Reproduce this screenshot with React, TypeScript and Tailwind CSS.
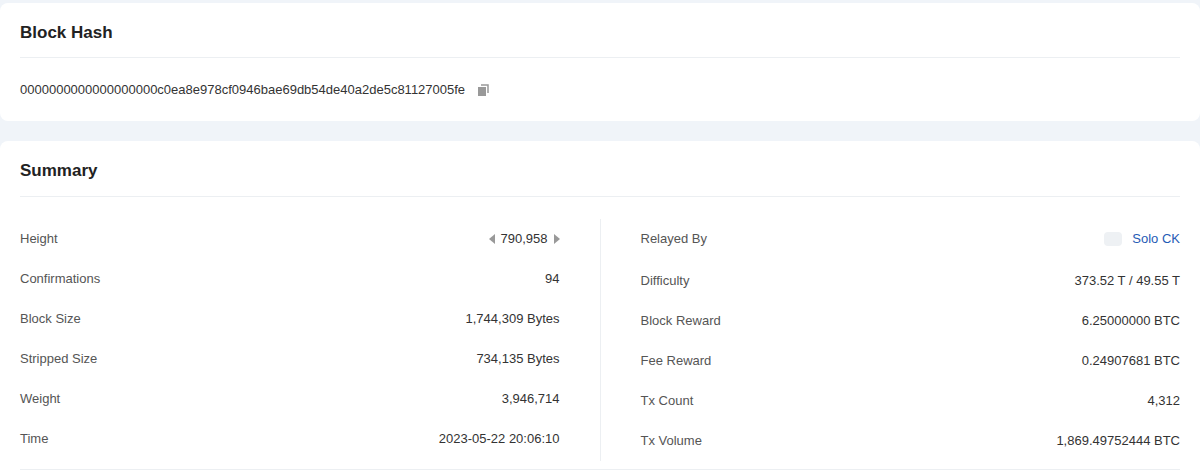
import React from "react";

const left: [string, React.ReactNode][] = [
  ["Height", null],
  ["Confirmations", "94"],
  ["Block Size", "1,744,309 Bytes"],
  ["Stripped Size", "734,135 Bytes"],
  ["Weight", "3,946,714"],
  ["Time", "2023-05-22 20:06:10"],
];
const right: [string, string][] = [
  ["Relayed By", ""],
  ["Difficulty", "373.52 T / 49.55 T"],
  ["Block Reward", "6.25000000 BTC"],
  ["Fee Reward", "0.24907681 BTC"],
  ["Tx Count", "4,312"],
  ["Tx Volume", "1,869.49752444 BTC"],
];

export default function App() {
  return (
    <div className="w-[1200px] h-[474px] overflow-hidden bg-[#f0f4f9] pt-[3px] text-[#333] text-[13px]" style={{ fontFamily: "'Liberation Sans', Arial, sans-serif" }}>
      <div className="bg-white rounded-lg px-5 h-[118px]">
        <div className="h-[55px] pt-[5px] flex items-center border-b border-[#eceff2] text-[17px] font-semibold text-[#222]">Block Hash</div>
        <div className="h-[66px] flex items-center gap-3 -mt-[1px]">
          <span>0000000000000000000c0ea8e978cf0946bae69db54de40a2de5c81127005fe</span>
          <svg width="14" height="14" viewBox="0 0 14 14"><rect x="1" y="4" width="8" height="9" fill="#999" /><path d="M4 2h7v8" stroke="#999" strokeWidth="1.5" fill="none" /></svg>
        </div>
      </div>
      <div className="bg-white rounded-lg px-5 mt-[20px] h-[340px]">
        <div className="h-[56px] pt-[5px] flex items-center border-b border-[#eceff2] text-[17px] font-semibold text-[#222]">Summary</div>
        <div className="flex pt-[22px] border-b border-[#eceff2] pb-[8px]">
          <div className="flex-1 pr-10 border-r border-[#eceff2]">
            {left.map(([k, v], i) => (
              <div key={k} className="h-10 flex items-center justify-between">
                <span className="text-[#555]">{k}</span>
                {i === 0 ? (
                  <span className="flex items-center gap-[6px]">
                    <svg width="6" height="10" viewBox="0 0 6 10"><path d="M6 0L0 5l6 5z" fill="#999" /></svg>
                    <span>790,958</span>
                    <svg width="6" height="10" viewBox="0 0 6 10"><path d="M0 0l6 5-6 5z" fill="#999" /></svg>
                  </span>
                ) : (
                  <span>{v}</span>
                )}
              </div>
            ))}
          </div>
          <div className="flex-1 pl-10">
            {right.map(([k, v], i) => (
              <div key={k} className={`h-10 flex items-center justify-between ${i === 1 ? "mt-[2px]" : ""}`}>
                <span className="text-[#555]">{k}</span>
                {i === 0 ? (
                  <span className="flex items-center gap-[10px] text-[#1f5bb5]">
                    <span className="w-[18px] h-[14px] rounded-sm bg-[#eef1f4]" />
                    Solo CK
                  </span>
                ) : (
                  <span>{v}</span>
                )}
              </div>
            ))}
          </div>
        </div>
      </div>
    </div>
  );
}
